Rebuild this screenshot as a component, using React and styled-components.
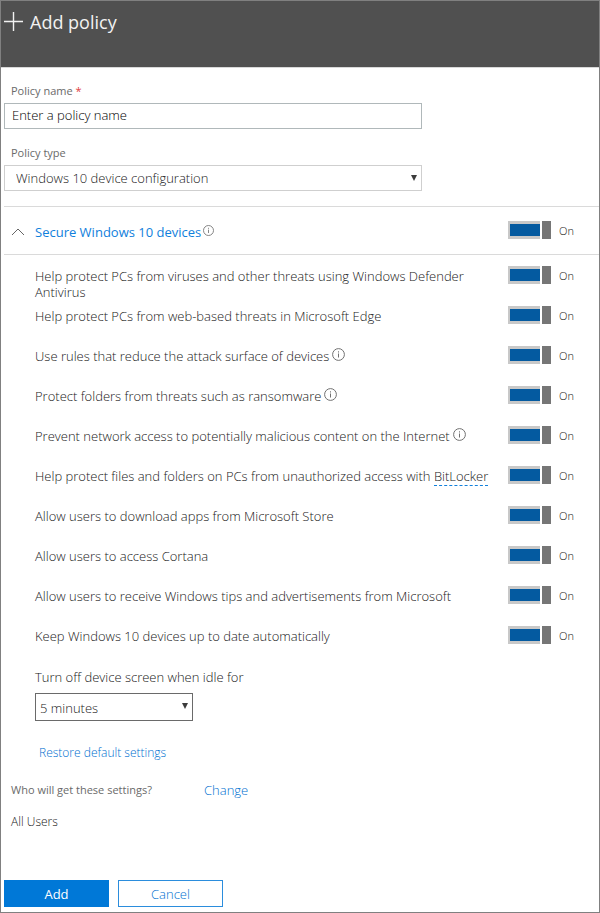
import React, { useState } from "react";
import styled, { createGlobalStyle } from "styled-components";

const GlobalStyle = createGlobalStyle`
  *, *::before, *::after { box-sizing: border-box; }
  body {
    margin: 0;
    background: #fff;
    font-family: "Open Sans", "Noto Sans", sans-serif;
    font-size: 13px;
    font-weight: 300;
    line-height: 16px;
    color: #202020;
  }
  input, select, button { font: inherit; color: inherit; margin: 0; border-radius: 0; }
`;

const Panel = styled.form`
  display: flex;
  flex-direction: column;
  min-height: 100vh;
  border: 1px solid #808080;
`;

const Header = styled.header`
  display: flex;
  align-items: flex-start;
  gap: 7px;
  height: 67px;
  padding: 8px 3px;
  background: #505050;
  border-bottom: 1px solid #d8d8d8;
  color: #f2f2f2;
`;

const PlusIcon = styled.svg`
  width: 19px;
  height: 19px;
  margin-top: 3px;
`;

const Title = styled.h1`
  margin: 0;
  font-size: 18px;
  font-weight: 400;
  line-height: 26px;
`;

const Fields = styled.div`
  display: flex;
  flex-direction: column;
  gap: 16px;
  padding: 15px 3px;
`;

const Field = styled.div`
  display: flex;
  flex-direction: column;
  gap: 4px;
  max-width: 418px;
`;

const Label = styled.label`
  padding-left: 7px;
  font-size: 11px;
  font-weight: 400;
  color: #6a6a6a;
`;

const Required = styled.span`
  color: #e03c3c;
`;

const TextInput = styled.input`
  width: 100%;
  height: 26px;
  padding: 0 7px 2px;
  border: 1px solid #b0b8ba;
  background: #fff;
  &::placeholder { color: #000; opacity: 1; }
`;

const SelectFrame = styled.div`
  position: relative;
  max-width: ${(p) => p.$max || "none"};
`;

const Select = styled.select`
  display: block;
  appearance: none;
  width: 100%;
  height: ${(p) => (p.$strong ? "28px" : "26px")};
  padding: ${(p) => (p.$strong ? "2px 20px 0 4px" : "0 20px 1px 11px")};
  border: 1px solid ${(p) => (p.$strong ? "#6a6a6a" : "#cfcfcf")};
  background: #fff;
`;

const Arrow = styled.svg`
  position: absolute;
  right: 5px;
  top: 10px;
  width: 6px;
  height: 6px;
  fill: #3c3c3c;
  pointer-events: none;
`;

const SectionHead = styled.div`
  display: flex;
  align-items: center;
  height: 49px;
  margin-left: 3px;
  padding: 0 0 1px 6px;
  border: solid #dadada;
  border-width: 1px 0;
`;

const SectionButton = styled.button`
  display: flex;
  align-items: center;
  gap: 10px;
  padding: 3px 0 0;
  border: 0;
  background: none;
  font-weight: 400;
  color: #1080dc;
`;

const Chevron = styled.svg`
  width: 14px;
  height: 8px;
  margin-left: 1px;
  fill: none;
  stroke: #666;
  transform: ${(p) => (p.$open ? "none" : "rotate(180deg)")};
`;

const SwitchLabel = styled.label`
  display: flex;
  flex: none;
  align-items: flex-start;
  gap: 8px;
  width: 91px;
  margin-left: auto;
  font-size: 11px;
  line-height: 18px;
  span { padding-top: 1px; }
`;

const SwitchInput = styled.input`
  appearance: none;
  display: flex;
  gap: 2px;
  width: 43px;
  height: 18px;
  &::before {
    content: "";
    flex: 1;
    border: solid #c8c8c8;
    border-width: 3px 0 3px 2px;
    background: #fff;
  }
  &::after {
    content: "";
    width: 9px;
    background: #767676;
  }
  &:checked::before { background: #045aa0; }
  &:not(:checked) { flex-direction: row-reverse; }
`;

const Settings = styled.ul`
  display: flex;
  flex-direction: column;
  margin: 0;
  padding: 11px 0 0 34px;
  list-style: none;
`;

const Setting = styled.li`
  display: flex;
  align-items: flex-start;
  min-height: 40px;
`;

const SettingText = styled.div`
  max-width: 460px;
  padding-top: 2px;
`;

const InfoButton = styled.button`
  height: 13px;
  padding: 0;
  margin-left: ${(p) => (p.$small ? "2px" : "3px")};
  border: 0;
  background: none;
  color: #707070;
  svg {
    display: block;
    width: ${(p) => (p.$small ? "11px" : "13px")};
    height: ${(p) => (p.$small ? "11px" : "13px")};
  }
`;

const TermLink = styled.a`
  color: inherit;
  text-decoration: none;
  border-bottom: 1px dashed #1080dc;
`;

const Idle = styled.div`
  display: flex;
  flex-direction: column;
  gap: 8px;
  padding: 3px 0 0 34px;
`;

const ActionLink = styled.a`
  color: #0070d0;
  font-size: ${(p) => (p.$small ? "12px" : "13px")};
  text-decoration: none;
`;

const Restore = styled.div`
  padding: 23px 0 0 38px;
`;

const Audience = styled.dl`
  display: grid;
  grid-template-columns: 193px auto;
  justify-content: start;
  row-gap: 16px;
  margin: 0;
  padding: 21px 0 0 10px;
  dt, dd { margin: 0; }
  dt {
    font-size: 11px;
    font-weight: 400;
    color: #6a6a6a;
  }
`;

const Group = styled.dd`
  font-size: 12px;
`;

const Footer = styled.footer`
  display: flex;
  gap: 9px;
  margin-top: auto;
  padding: 24px 3px 5px;
`;

const Button = styled.button`
  width: 105px;
  height: 27px;
  padding: 1px 0 0;
  border: 1px solid ${(p) => (p.$primary ? "#0078d7" : "#2b8ddd")};
  background: ${(p) => (p.$primary ? "#0078d7" : "#fff")};
  color: ${(p) => (p.$primary ? "#fff" : "#0070d0")};
  font-weight: ${(p) => (p.$primary ? 400 : 300)};
`;

const settings = [
  { text: "Help protect PCs from viruses and other threats using Windows Defender Antivirus" },
  { text: "Help protect PCs from web-based threats in Microsoft Edge" },
  { text: "Use rules that reduce the attack surface of devices", info: true },
  { text: "Protect folders from threats such as ransomware", info: true },
  { text: "Prevent network access to potentially malicious content on the Internet", info: true },
  { text: "Help protect files and folders on PCs from unauthorized access with ", term: "BitLocker" },
  { text: "Allow users to download apps from Microsoft Store" },
  { text: "Allow users to access Cortana" },
  { text: "Allow users to receive Windows tips and advertisements from Microsoft" },
  { text: "Keep Windows 10 devices up to date automatically" },
];

function Info({ small }) {
  return (
    <InfoButton type="button" $small={small} aria-label="More information">
      <svg viewBox="0 0 13 13" fill="none" stroke="currentColor">
        <circle cx="6.5" cy="6.5" r="5.9" />
        <path d="M6.5 5.5v4M6.5 3.3v1.2" />
      </svg>
    </InfoButton>
  );
}

function Switch({ name }) {
  const [on, setOn] = useState(true);
  return (
    <SwitchLabel>
      <SwitchInput
        type="checkbox"
        role="switch"
        aria-label={name}
        checked={on}
        onChange={(e) => setOn(e.target.checked)}
      />
      <span>{on ? "On" : "Off"}</span>
    </SwitchLabel>
  );
}

function DropArrow() {
  return (
    <Arrow viewBox="0 0 6 6" aria-hidden="true">
      <path d="M0 0h6L3 6z" />
    </Arrow>
  );
}

export default function App() {
  const [open, setOpen] = useState(true);
  return (
    <>
      <GlobalStyle />
      <Panel onSubmit={(e) => e.preventDefault()}>
        <Header>
          <PlusIcon viewBox="0 0 19 19" stroke="currentColor" strokeWidth="1.4" aria-hidden="true">
            <path d="M9.5 0v19M0 9.5h19" />
          </PlusIcon>
          <Title>Add policy</Title>
        </Header>

        <Fields>
          <Field>
            <Label htmlFor="policy-name">
              Policy name <Required>*</Required>
            </Label>
            <TextInput id="policy-name" placeholder="Enter a policy name" />
          </Field>
          <Field>
            <Label htmlFor="policy-type">Policy type</Label>
            <SelectFrame>
              <Select id="policy-type">
                <option>Windows 10 device configuration</option>
              </Select>
              <DropArrow />
            </SelectFrame>
          </Field>
        </Fields>

        <SectionHead>
          <SectionButton type="button" aria-expanded={open} onClick={() => setOpen(!open)}>
            <Chevron viewBox="0 0 14 8" $open={open} aria-hidden="true">
              <path d="M1 7l6-6 6 6" />
            </Chevron>
            Secure Windows 10 devices
          </SectionButton>
          <Info small />
          <Switch name="Secure Windows 10 devices" />
        </SectionHead>

        {open && (
          <>
            <Settings>
              {settings.map((s) => (
                <Setting key={s.text}>
                  <SettingText>
                    {s.text}
                    {s.term && <TermLink href="#bitlocker">{s.term}</TermLink>}
                    {s.info && <Info />}
                  </SettingText>
                  <Switch name={s.text + (s.term || "")} />
                </Setting>
              ))}
            </Settings>
            <Idle>
              <label htmlFor="idle">Turn off device screen when idle for</label>
              <SelectFrame $max="158px">
                <Select id="idle" $strong>
                  <option>5 minutes</option>
                </Select>
                <DropArrow />
              </SelectFrame>
            </Idle>
            <Restore>
              <ActionLink href="#restore" $small>Restore default settings</ActionLink>
            </Restore>
          </>
        )}

        <Audience>
          <dt>Who will get these settings?</dt>
          <dd>
            <ActionLink href="#change">Change</ActionLink>
          </dd>
          <Group>All Users</Group>
        </Audience>

        <Footer>
          <Button type="submit" $primary>Add</Button>
          <Button type="button">Cancel</Button>
        </Footer>
      </Panel>
    </>
  );
}
